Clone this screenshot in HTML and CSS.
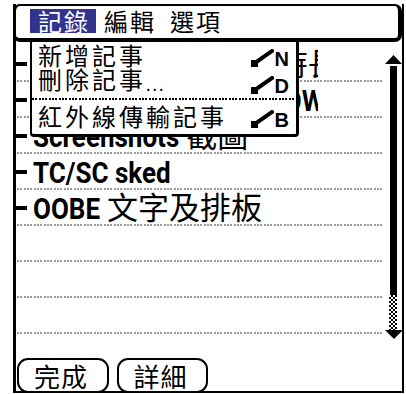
FILE: index.html
```html
<!DOCTYPE html>
<html lang="zh-Hant">
<head>
<meta charset="utf-8">
<title>記事</title>
<link rel="stylesheet" href="styles.css">
</head>
<body>
<div class="window">
  <div class="content">
    <div class="list">
      <div class="rows">
        <div class="row"><span class="stub"></span><span class="txt"><b class="lat">PDA</b> 新品上市計劃時長</span></div>
        <div class="row"><span class="stub"></span><span class="txt"><b class="lat">Palm Desktop Sync NOW</b></span></div>
        <div class="row"><span class="stub"></span><span class="txt"><b class="lat">Screenshots</b> 截圖</span></div>
        <div class="row"><span class="stub"></span><span class="txt"><b class="lat">TC/SC sked</b></span></div>
        <div class="row"><span class="stub"></span><span class="txt"><b class="lat">OOBE</b> 文字及排板</span></div>
        <div class="row empty"></div>
        <div class="row empty"></div>
        <div class="row empty"></div>
      </div>
      <div class="scrollbar">
        <svg class="arrow" width="17" height="9" viewBox="0 0 17 9"><polygon points="8.5,0 17,9 0,9" fill="#000"/></svg>
        <div class="thumb"></div>
        <div class="track"></div>
        <svg class="arrow" width="18" height="9" viewBox="0 0 18 9"><polygon points="0,0 18,0 9,9" fill="#000"/></svg>
      </div>
    </div>
    <div class="buttons">
      <div class="btn btn-done">完成</div>
      <div class="btn btn-detail">詳細</div>
    </div>
  </div>

  <div class="menubar">
    <span class="mtitle active">記錄</span><span class="mtitle">編輯</span><span class="mtitle">選項</span>
  </div>

  <div class="dropdown">
    <div class="item"><span class="label">新增記事</span><span class="sc"><svg width="23" height="18" viewBox="0 0 23 18"><rect x="0" y="11" width="7" height="7" fill="#000"/><line x1="4" y1="14" x2="21" y2="2" stroke="#000" stroke-width="4" stroke-linecap="square"/></svg><b>N</b></span></div>
    <div class="item"><span class="label">刪除記事<span class="dots">...</span></span><span class="sc"><svg width="23" height="18" viewBox="0 0 23 18"><rect x="0" y="11" width="7" height="7" fill="#000"/><line x1="4" y1="14" x2="21" y2="2" stroke="#000" stroke-width="4" stroke-linecap="square"/></svg><b>D</b></span></div>
    <div class="sep"></div>
    <div class="item"><span class="label">紅外線傳輸記事</span><span class="sc"><svg width="23" height="18" viewBox="0 0 23 18"><rect x="0" y="11" width="7" height="7" fill="#000"/><line x1="4" y1="14" x2="21" y2="2" stroke="#000" stroke-width="4" stroke-linecap="square"/></svg><b>B</b></span></div>
  </div>
</div>
</body>
</html>
```

FILE: styles.css
```css
* { box-sizing: border-box; }

html, body {
  margin: 0;
  padding: 0;
  background: #fff;
}

body {
  width: 406px;
  height: 394px;
  overflow: hidden;
  font-family: "Noto Sans CJK TC", "Noto Sans", sans-serif;
  color: #000;
}

.window {
  position: relative;
  margin: 4px 0 0 13px;
  width: 391px;
  height: 389px;
  border-left: 3px solid #000;
  border-right: 2px solid #000;
  border-bottom: 2px solid #000;
}

.content {
  height: 100%;
  display: flex;
  flex-direction: column;
  padding-top: 42px;
}

.list {
  display: flex;
}

.rows {
  width: 369px;
  display: flex;
  flex-direction: column;
}

.row {
  height: 36px;
  margin: 0 2px 0 1px;
  display: flex;
  align-items: center;
  background-image: linear-gradient(90deg, #9a9a9a 0 2px, transparent 2px 3px, #9a9a9a 3px 5px, transparent 5px 7px, #9a9a9a 7px 9px, transparent 9px 10px);
  background-size: 10px 2px;
  background-repeat: repeat-x;
  background-position: 0 100%;
}

.stub {
  width: 11px;
  height: 4px;
  margin-left: -1px;
  background: #000;
  flex: none;
}

.txt {
  margin-left: 6px;
  width: 285px;
  overflow: hidden;
  white-space: nowrap;
  font-size: 31px;
  line-height: 30px;
  padding-bottom: 2px;
}

.lat {
  display: inline-block;
  font-family: Roboto, "Liberation Sans", Arial, sans-serif;
  font-weight: bold;
  font-size: 26px;
  line-height: 26px;
  transform-origin: 50% 22px;
  transform: scaleY(1.15);
}

.scrollbar {
  width: 17px;
  padding-top: 9px;
  display: flex;
  flex-direction: column;
}

.arrow { display: block; flex: none; }

.thumb {
  width: 7px;
  height: 229px;
  margin: 2px 0 0 5px;
  background: #000;
}

.track {
  width: 8px;
  height: 35px;
  margin-left: 4px;
  background-color: #fff;
  background-image: conic-gradient(#000 25%, #fff 0 50%, #000 0 75%, #fff 0);
  background-size: 4px 4px;
}

.buttons {
  margin-top: auto;
  margin-bottom: -2px;
  display: flex;
  gap: 8px;
  padding-left: 1px;
}

.btn {
  height: 35px;
  border: 2px solid #000;
  border-radius: 11px;
  display: flex;
  align-items: center;
  justify-content: center;
  font-size: 26px;
  letter-spacing: 1px;
  line-height: 1;
  padding-right: 4px;
  background: #fff;
}

.btn-done { width: 92px; }
.btn-detail { width: 91px; }

/* menu bar overlay */
.menubar {
  position: absolute;
  left: -3px;
  top: 0;
  width: 389px;
  height: 38px;
  border-style: solid;
  border-color: #000;
  border-width: 2px 4px 4px 3px;
  border-radius: 7px;
  background: #fff;
  padding: 3px 0 0 14px;
  display: flex;
  align-items: flex-start;
  z-index: 3;
}

.mtitle {
  height: 24px;
  padding: 0 6px 0 8px;
  font-size: 24px;
  line-height: 24px;
  letter-spacing: 2px;
}

.mtitle.active {
  background: #32328f;
  color: #fff;
}

/* dropdown overlay */
.dropdown {
  position: absolute;
  left: 14px;
  top: 37px;
  width: 269px;
  height: 96px;
  border-style: solid;
  border-color: #000;
  border-width: 0 3px 3px 2px;
  border-radius: 0 0 4px 4px;
  background: #fff;
  padding: 0 7px 0 6px;
  z-index: 2;
}

.item {
  height: 27px;
  display: flex;
  align-items: center;
  justify-content: space-between;
  font-size: 24px;
  letter-spacing: 3px;
  line-height: 27px;
}

.dots {
  font-size: 16px;
  letter-spacing: 2px;
  vertical-align: -2px;
}

.sc {
  display: flex;
  align-items: flex-end;
  padding-top: 6px;
}

.sc svg { display: block; }

.sc b {
  font-family: "Liberation Sans", Arial, sans-serif;
  font-weight: bold;
  font-size: 20px;
  line-height: 16px;
  letter-spacing: 0;
  margin-left: 1px;
}

.sep {
  height: 2px;
  margin: 3px -6px 2px -6px;
  background-image: linear-gradient(90deg, #000 0 2px, transparent 2px 3px, #000 3px 5px, transparent 5px 7px, #000 7px 9px, transparent 9px 10px);
  background-size: 10px 2px;
  background-repeat: repeat-x;
}
```
